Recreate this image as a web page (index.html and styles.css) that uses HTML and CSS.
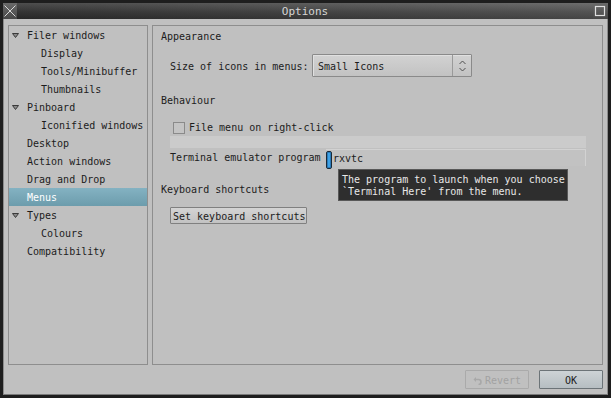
FILE: index.html
```html
<!DOCTYPE html>
<html>
<head>
<meta charset="utf-8">
<title>Options</title>
<link rel="stylesheet" href="styles.css">
</head>
<body>
<div class="window">
  <div class="titlebar">
    <div class="tb-btn close">
      <svg width="14" height="16" viewBox="0 0 14 16"><path d="M1.5 2.5 L12.5 13.5 M12.5 2.5 L1.5 13.5" stroke="#d8d8d8" stroke-width="1" fill="none"/></svg>
    </div>
    <div class="title">Options</div>
    <div class="tb-btn max">
      <svg width="14" height="16" viewBox="0 0 14 16"><rect x="2.5" y="3.5" width="9" height="9" stroke="#e0e0e0" stroke-width="1.2" fill="none"/></svg>
    </div>
  </div>
  <div class="body">
    <div class="panes">
      <div class="tree">
        <div class="item"><span class="exp"><svg width="7" height="5" viewBox="0 0 7 5"><polygon points="0.5,0.5 6.5,0.5 3.5,4.5" fill="#8a8a8a" stroke="#3a3a3a" stroke-width="1"/></svg></span>Filer windows</div>
        <div class="item child">Display</div>
        <div class="item child">Tools/Minibuffer</div>
        <div class="item child">Thumbnails</div>
        <div class="item"><span class="exp"><svg width="7" height="5" viewBox="0 0 7 5"><polygon points="0.5,0.5 6.5,0.5 3.5,4.5" fill="#8a8a8a" stroke="#3a3a3a" stroke-width="1"/></svg></span>Pinboard</div>
        <div class="item child">Iconified windows</div>
        <div class="item">Desktop</div>
        <div class="item">Action windows</div>
        <div class="item">Drag and Drop</div>
        <div class="item selected">Menus</div>
        <div class="item"><span class="exp"><svg width="7" height="5" viewBox="0 0 7 5"><polygon points="0.5,0.5 6.5,0.5 3.5,4.5" fill="#8a8a8a" stroke="#3a3a3a" stroke-width="1"/></svg></span>Types</div>
        <div class="item child">Colours</div>
        <div class="item">Compatibility</div>
      </div>
      <div class="page">
        <div class="heading first">Appearance</div>
        <div class="combo-row">
          <span class="label">Size of icons in menus:</span>
          <div class="combo">
            <span class="combo-text">Small Icons</span>
            <span class="combo-arrows">
              <svg width="9" height="14" viewBox="0 0 9 14"><path d="M1.5 5 L4.5 2 L7.5 5 M1.5 9 L4.5 12 L7.5 9" stroke="#505050" stroke-width="1" fill="none"/></svg>
            </span>
          </div>
        </div>
        <div class="heading behaviour">Behaviour</div>
        <div class="check-row">
          <span class="checkbox"></span>
          <span>File menu on right-click</span>
        </div>
        <div class="bar"></div>
        <div class="entry-row">
          <span class="label">Terminal emulator program</span>
          <div class="entry">
            <span class="cursor"></span>
            <span class="entry-text">rxvtc</span>
          </div>
          <div class="tooltip">The program to launch when you choose<br>`Terminal Here' from the menu.</div>
        </div>
        <div class="heading keys">Keyboard shortcuts</div>
        <div class="btn-row">
          <button class="btn">Set keyboard shortcuts</button>
        </div>
      </div>
    </div>
    <div class="actions">
      <button class="abtn revert">
        <svg width="9" height="9" viewBox="0 0 9 9"><path d="M3 1 L0.5 3.5 L3 6 Z" fill="#a8a8a8"/><path d="M2.5 3.5 H5.5 Q8 3.5 8 6 Q8 8.5 5.5 8.5" stroke="#a8a8a8" stroke-width="1.6" fill="none"/></svg>
        <span>Revert</span>
      </button>
      <button class="abtn ok">OK</button>
    </div>
  </div>
</div>
</body>
</html>
```

FILE: styles.css
```css
* { box-sizing: border-box; }
html, body {
  margin: 0;
  padding: 0;
  background: #1e1e1e;
}
body {
  width: 611px;
  height: 398px;
  padding: 3px 3px 0 3px;
  font-family: "DejaVu Sans Mono", "Liberation Mono", monospace;
  font-size: 10px;
  color: #1c1c1c;
}
.window {
  width: 605px;
  height: 392px;
  display: flex;
  flex-direction: column;
}
.titlebar {
  height: 16px;
  display: flex;
  align-items: stretch;
  background: linear-gradient(to bottom, #5a5a5a 0%, #3c3c3c 55%, #2c2c2c 100%);
  position: relative;
}
.titlebar::after {
  content: "";
  position: absolute;
  inset: 0;
  background: linear-gradient(to right, rgba(0,0,0,0.15), rgba(255,255,255,0.12));
  pointer-events: none;
}
.tb-btn {
  width: 14px;
  height: 16px;
  background: linear-gradient(to bottom, #6a6a6a, #484848);
  position: relative;
  z-index: 1;
}
.tb-btn svg { display: block; }
.max { margin-right: 1px; }
.title {
  flex: 1;
  text-align: center;
  line-height: 17px;
  color: #d6d6d6;
  position: relative;
  z-index: 1;
  font-size: 11px;
}
.body {
  flex: 1;
  background: #c0c0c0;
  border-left: 1px solid #8c8c8c;
  border-right: 1px solid #8c8c8c;
  border-bottom: 1px solid #7a7a7a;
  padding: 6px 4px 0 4px;
  display: flex;
  flex-direction: column;
}
.panes {
  display: flex;
  gap: 4px;
  height: 340px;
}
.tree {
  width: 140px;
  border: 1px solid #8e8e8e;
}
.item {
  height: 18px;
  line-height: 20px;
  padding-left: 18px;
  position: relative;
  white-space: nowrap;
}
.item.child { padding-left: 32px; }
.item.selected {
  background: linear-gradient(to bottom, #84b2c2, #6c9cac);
  color: #ffffff;
}
.exp {
  position: absolute;
  left: 3px;
  top: 7px;
  width: 7px;
  height: 5px;
}
.exp svg { display: block; }
.page {
  flex: 1;
  border: 1px solid #8e8e8e;
  padding: 1px 0 0 8px;
  position: relative;
}
.heading {
  height: 18px;
  line-height: 20px;
}
.combo-row {
  margin-top: 9px;
  height: 23px;
  display: flex;
  align-items: center;
  padding-left: 9px;
}
.combo-row .label { width: 142px; white-space: nowrap; padding-top: 1px; }
.combo {
  width: 160px;
  height: 23px;
  border: 1px solid #8a8a8a;
  border-radius: 1px;
  background: linear-gradient(to bottom, #d2d2d2, #c2c2c2);
  box-shadow: inset 1px 1px 0 #e0e0e0;
  display: flex;
  align-items: center;
}
.combo-text { flex: 1; padding-left: 5px; padding-top: 1px; }
.combo-arrows {
  width: 19px;
  height: 21px;
  border-left: 1px solid #9a9a9a;
  display: flex;
  align-items: center;
  justify-content: center;
}
.combo-arrows svg { display: block; }
.behaviour { margin-top: 14px; }
.check-row {
  margin-top: 12px;
  height: 14px;
  display: flex;
  align-items: center;
  padding-left: 12px;
  gap: 4px;
}
.check-row span:last-child { margin-top: -1px; }
.checkbox {
  width: 12px;
  height: 12px;
  border: 1px solid #8a8a8a;
  background: #c4c4c4;
}
.bar {
  margin-top: 1px;
  margin-left: 9px;
  width: 416px;
  height: 12px;
  background: #cbcbcb;
}
.entry-row {
  margin-top: 1px;
  height: 17px;
  display: flex;
  align-items: center;
  padding-left: 9px;
  position: relative;
}
.entry-row .label { width: 156px; white-space: nowrap; }
.entry {
  width: 260px;
  height: 17px;
  border-top: 1px solid #d2d2d2;
  border-right: 1px solid #d2d2d2;
  background: #c2c2c2;
  position: relative;
  display: flex;
  align-items: center;
  padding-left: 7px;
}
.cursor {
  position: absolute;
  left: 0;
  top: 1px;
  width: 6px;
  height: 18px;
  border: 1px solid #1a2a38;
  border-radius: 2px;
  background: #3ea2e6;
  box-shadow: inset 0 0 0 1px #2a7ab8;
}
.tooltip {
  position: absolute;
  left: 177px;
  top: 20px;
  width: 230px;
  height: 32px;
  background: #2e2e2e;
  border: 1px solid #585858;
  color: #e8e8e8;
  padding: 4px 0 0 3px;
  line-height: 12px;
  white-space: nowrap;
  z-index: 2;
}
.keys { margin-top: 14px; }
.btn-row {
  margin-top: 9px;
  padding-left: 9px;
}
.btn {
  width: 137px;
  height: 17px;
  border: 1px solid #808080;
  border-radius: 1px;
  background: linear-gradient(to bottom, #d4d4d4, #c2c2c2);
  font-family: inherit;
  font-size: 10px;
  color: #1c1c1c;
  padding: 1px 0 0 2px;
  text-align: left;
  display: block;
}
.actions {
  margin-top: 5px;
  display: flex;
  justify-content: flex-end;
  gap: 10px;
}
.abtn {
  width: 64px;
  height: 19px;
  font-family: inherit;
  font-size: 10px;
  padding: 1px 0 0 0;
  border-radius: 1px;
  display: flex;
  align-items: center;
  justify-content: center;
}
.revert {
  border: 1px solid #aaaaaa;
  background: #c0c0c0;
  color: #a2a2a2;
  gap: 3px;
}
.revert svg { display: block; }
.ok {
  border: 1px solid #6c7478;
  background: linear-gradient(to bottom, #cdd3d6, #b6bec2);
  color: #1c1c1c;
}
```
